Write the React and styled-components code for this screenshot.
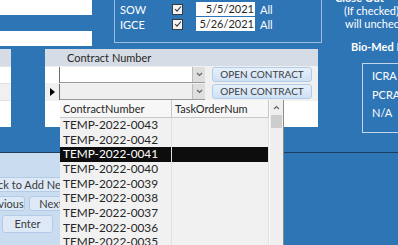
import React from 'react'
import styled, { createGlobalStyle } from 'styled-components'

const colors = {
  blue: '#2e75b6',
  navy: '#1f3d5c',
  panel: '#f0f0f0',
  header: '#d6dce5',
  text: '#262626',
  frame: '#9bbce0',
  light: '#c9dcf0',
  button: '#dde9f6',
  buttonEdge: '#b3cbe6',
}

const GlobalStyle = createGlobalStyle`
  html, body { margin: 0; padding: 0; }
  body {
    font-family: Lato, "Open Sans", sans-serif;
    font-size: 11px;
    color: ${colors.text};
  }
`

const Page = styled.div`
  position: relative;
  width: 398px;
  height: 245px;
  overflow: hidden;
  background: ${colors.blue};
  display: flex;
  flex-direction: column;
`

const HeaderSection = styled.div`
  display: flex;
  height: 152px;
`

const Divider = styled.div`
  height: 1px;
  background: ${colors.navy};
`

const MainCol = styled.div`
  width: 322px;
  display: flex;
  flex-direction: column;
`

const TopRow = styled.div`
  height: 49px;
  display: flex;
`

const FieldCol = styled.div`
  width: 92px;
  display: flex;
  flex-direction: column;
  gap: 16px;
`

const TextBox = styled.div`
  height: 15px;
  background: #fff;
`

const GroupBox = styled.div`
  margin-left: 22px;
  flex: 1;
  height: 43px;
  border: 1px solid ${colors.frame};
  border-top: none;
  display: flex;
  flex-direction: column;
  gap: 1px;
  padding-top: 2px;
  box-sizing: border-box;
`

const DocRow = styled.div`
  display: flex;
  align-items: center;
  height: 14px;
  padding-left: 5px;
  color: #fff;
  font-size: 11px;
`

const DocLabel = styled.span`
  width: 52px;
`

const Check = styled.span`
  width: 9px;
  height: 9px;
  border: 1px solid #3a3a3a;
  background: #f4f4f4;
  display: flex;
  align-items: center;
  justify-content: center;
`

const DateBox = styled.span`
  margin-left: 13px;
  width: 59px;
  height: 14px;
  background: #fff;
  color: ${colors.text};
  text-align: right;
  line-height: 14px;
  font-size: 11px;
  box-sizing: border-box;
  padding-right: 1px;
`

const AllLabel = styled.span`
  margin-left: 5px;
`

const SubRow = styled.div`
  display: flex;
  height: 78px;
`

const SidePanel = styled.div`
  width: 11px;
  display: flex;
  flex-direction: column;
  background: #fff;
`

const SideHead = styled.div`
  height: 17px;
  background: ${colors.header};
`

const SideLine = styled.div`
  height: 16px;
  background: ${p => (p.$alt ? '#f0f0f0' : '#fff')};
  border-top: 1px solid #e2e2e2;
`

const Subform = styled.div`
  margin-left: 34px;
  width: 273px;
  background: ${colors.panel};
  display: flex;
  flex-direction: column;
`

const SubHead = styled.div`
  height: 17px;
  line-height: 17px;
  background: ${colors.header};
  padding-left: 22px;
  font-size: 11px;
  margin-bottom: 1px;
`

const RecordRow = styled.div`
  display: flex;
  height: 16px;
  margin-bottom: 1px;
`

const Selector = styled.div`
  width: 14px;
  border-right: 1px solid #6d6d6d;
  background: ${p => (p.$current ? '#f0f0f0' : '#fff')};
  display: flex;
  align-items: center;
  justify-content: center;
`

const Combo = styled.div`
  width: 145px;
  display: flex;
  background: ${p => (p.$current ? '#efefef' : '#fff')};
  border-bottom: 1px solid #9a9a9a;
`

const ComboDrop = styled.div`
  margin-left: auto;
  width: 12px;
  background: #dedede;
  border-left: 1px solid #bcbcbc;
  display: flex;
  align-items: center;
  justify-content: center;
`

const OpenButton = styled.div`
  margin-left: 7px;
  width: 100px;
  height: 15px;
  box-sizing: border-box;
  border: 1px solid ${colors.buttonEdge};
  border-radius: 3px;
  background: linear-gradient(#e6f0fa, #cfe1f5);
  text-align: center;
  line-height: 13px;
  font-size: 10px;
  color: #3b3b3b;
`

const NewArea = styled.div`
  flex: 1;
  background: #fff;
`

const RightCol = styled.div`
  flex: 1;
  display: flex;
  flex-direction: column;
  color: #fff;
  white-space: nowrap;
  overflow: hidden;
  font-size: 11px;
`

const Note = styled.div`
  padding-left: ${p => p.$indent}px;
  margin-top: ${p => p.$top || 0}px;
  line-height: 13px;
  font-weight: ${p => (p.$bold ? 700 : 400)};
`

const RiskBox = styled.div`
  margin: 10px 0 0 40px;
  height: 63px;
  border: 1px solid #c3d5e9;
  border-right: none;
  padding: 5px 0 0 9px;
  display: flex;
  flex-direction: column;
  gap: 5.5px;
  line-height: 13px;
`

const DetailSection = styled.div`
  flex: 1;
  display: flex;
`

const NavPanel = styled.div`
  width: 110px;
  background: ${colors.light};
  display: flex;
  flex-direction: column;
  padding-top: 24px;
  gap: 4px;
`

const NavRow = styled.div`
  display: flex;
  gap: 4px;
  margin-left: ${p => p.$shift || 0}px;
`

const NavButton = styled.div`
  width: ${p => p.$w}px;
  height: ${p => p.$h || 15}px;
  box-sizing: border-box;
  border: 1px solid ${colors.buttonEdge};
  border-radius: 3px;
  background: ${colors.button};
  text-align: center;
  line-height: ${p => (p.$h || 15) - 2}px;
  font-size: 11px;
  color: #3b3b3b;
  flex-shrink: 0;
  white-space: nowrap;
`

const DropList = styled.div`
  position: absolute;
  left: 60px;
  top: 100px;
  width: 223px;
  height: 160px;
  background: #f1f1f1;
  border-right: 1px solid #8a8a8a;
  display: flex;
`

const ListBody = styled.div`
  flex: 1;
  display: flex;
  flex-direction: column;
`

const ListRow = styled.div`
  display: grid;
  grid-template-columns: 112px 1fr;
  height: ${p => (p.$head ? 17 : 14.67)}px;
  line-height: ${p => (p.$head ? 17 : 14.67)}px;
  background: ${p => (p.$sel ? '#0d0d0d' : p.$head ? '#f7f7f7' : 'transparent')};
  color: ${p => (p.$sel ? '#fff' : colors.text)};
  border-bottom: ${p => (p.$head ? '1px solid #c8c8c8' : 'none')};
  font-size: ${p => (p.$head ? 11 : 11.8)}px;
`

const Cell = styled.div`
  padding-left: 3px;
  border-right: 1px solid ${p => (p.$head ? '#c8c8c8' : '#e0e0e0')};
  overflow: hidden;
  white-space: nowrap;
`

const ScrollBar = styled.div`
  width: 13px;
  border-left: 1px solid #fafafa;
  background: #efefef;
  display: flex;
  flex-direction: column;
`

const ScrollArrow = styled.div`
  height: 15px;
  display: flex;
  align-items: center;
  justify-content: center;
`

const Thumb = styled.div`
  margin: 0 1px;
  height: 13px;
  background: #cdcdcd;
`

const contracts = ['0043', '0042', '0041', '0040', '0039', '0038', '0037', '0036', '0035', '0034']

const Chevron = ({ up }) => (
  <svg width="7" height="5" viewBox="0 0 7 5">
    <path d={up ? 'M1 4 L3.5 1.5 L6 4' : 'M1 1 L3.5 3.5 L6 1'} fill="none" stroke="#606060" strokeWidth="1.1" />
  </svg>
)

const Tick = () => (
  <svg width="8" height="8" viewBox="0 0 8 8">
    <path d="M1 4 L3 6.2 L7 1.5" fill="none" stroke="#333" strokeWidth="1.1" />
  </svg>
)

const Pointer = () => (
  <svg width="5" height="8" viewBox="0 0 5 8">
    <path d="M0 0 L5 4 L0 8 Z" fill="#000" />
  </svg>
)

export default function App() {
  return (
    <Page>
      <GlobalStyle />
      <HeaderSection>
        <MainCol>
          <TopRow>
            <FieldCol>
              <TextBox />
              <TextBox />
            </FieldCol>
            <GroupBox>
              <DocRow>
                <DocLabel>SOW</DocLabel>
                <Check><Tick /></Check>
                <DateBox>5/5/2021</DateBox>
                <AllLabel>All</AllLabel>
              </DocRow>
              <DocRow>
                <DocLabel>IGCE</DocLabel>
                <Check><Tick /></Check>
                <DateBox>5/26/2021</DateBox>
                <AllLabel>All</AllLabel>
              </DocRow>
            </GroupBox>
          </TopRow>
          <SubRow>
            <SidePanel>
              <SideHead />
              <SideLine />
              <SideLine $alt />
              <SideLine />
            </SidePanel>
            <Subform>
              <SubHead>Contract Number</SubHead>
              <RecordRow>
                <Selector />
                <Combo>
                  <ComboDrop><Chevron /></ComboDrop>
                </Combo>
                <OpenButton>OPEN CONTRACT</OpenButton>
              </RecordRow>
              <RecordRow>
                <Selector $current><Pointer /></Selector>
                <Combo $current>
                  <ComboDrop><Chevron /></ComboDrop>
                </Combo>
                <OpenButton>OPEN CONTRACT</OpenButton>
              </RecordRow>
              <NewArea />
            </Subform>
          </SubRow>
        </MainCol>
        <RightCol>
          <Note $indent={13} $bold $top={-9}>Close Out</Note>
          <Note $indent={22}>(If checked), this</Note>
          <Note $indent={23}>will uncheck</Note>
          <Note $indent={29} $bold $top={10}>Bio-Med Eq</Note>
          <RiskBox>
            <span>ICRA</span>
            <span>PCRA</span>
            <span>N/A</span>
          </RiskBox>
        </RightCol>
      </HeaderSection>
      <Divider />
      <DetailSection>
        <NavPanel>
          <NavRow $shift={-20}>
            <NavButton $w={95}>Click to Add New</NavButton>
          </NavRow>
          <NavRow $shift={-19}>
            <NavButton $w={44}>Previous</NavButton>
            <NavButton $w={44}>Next</NavButton>
          </NavRow>
          <NavRow $shift={2}>
            <NavButton $w={51} $h={18}>Enter</NavButton>
          </NavRow>
        </NavPanel>
      </DetailSection>
      <DropList>
        <ListBody>
          <ListRow $head>
            <Cell $head>ContractNumber</Cell>
            <Cell $head>TaskOrderNum</Cell>
          </ListRow>
          {contracts.map(n => (
            <ListRow key={n} $sel={n === '0041'}>
              <Cell>TEMP-2022-{n}</Cell>
              <Cell />
            </ListRow>
          ))}
        </ListBody>
        <ScrollBar>
          <ScrollArrow><Chevron up /></ScrollArrow>
          <Thumb />
        </ScrollBar>
      </DropList>
    </Page>
  )
}
